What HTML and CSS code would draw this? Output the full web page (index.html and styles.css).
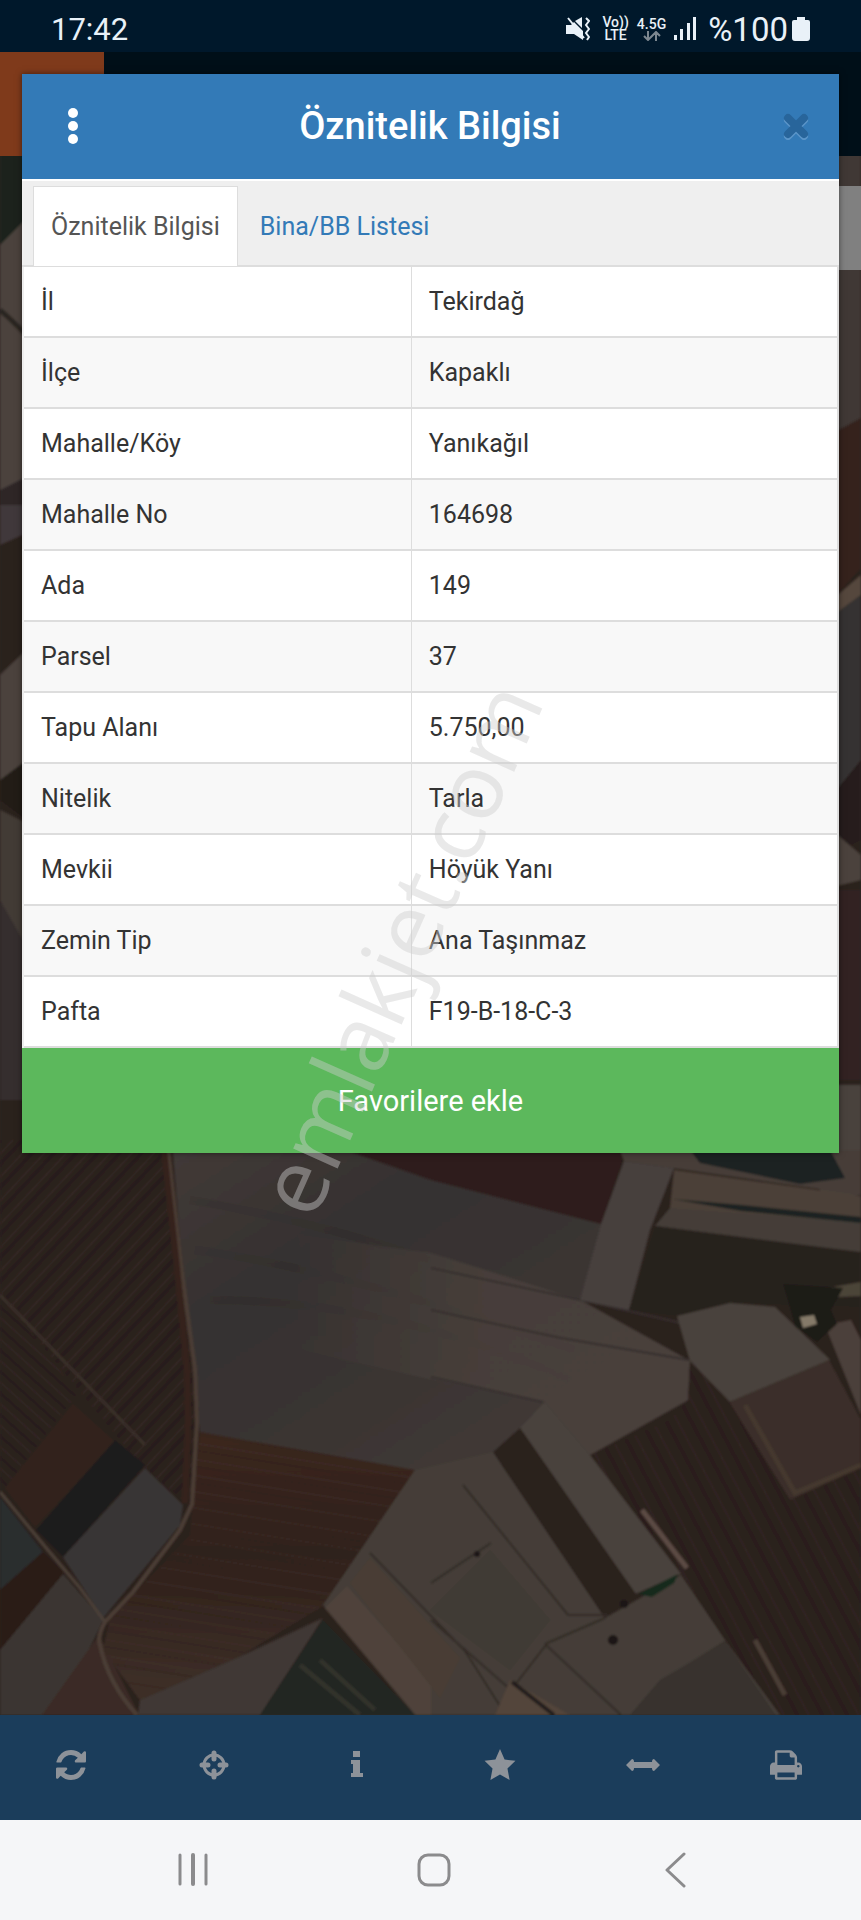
FILE: index.html
```html
<!DOCTYPE html>
<html lang="tr">
<head>
    <meta charset="UTF-8">
    <meta name="viewport" content="width=device-width, initial-scale=1.0">
    <title>Öznitelik Bilgisi</title>
    <link rel="stylesheet" href="styles.css">
</head>
<body>
    <div class="status-bar">
        <span class="clock">17:42</span>
        <div class="status-icons">
            <svg class="icon-mute" viewBox="0 0 24 24" width="24" height="24">
                <path d="M0 8h5l3-3 9 9v9l-9-6H0z M9 4l7-4v11z" fill="currentColor"/>
                <path d="M2 1l16 20M20 1l3 3-3 4 3 4-3 4 3 4-2 3" fill="none" stroke="currentColor" stroke-width="2"/>
            </svg>
            <span class="volte"><span>Vo))</span><span>LTE</span></span>
            <span class="network">
                <span>4.5G</span>
                <svg viewBox="0 0 18 10" width="18" height="10"><path d="M5 0v9M1 5l4 4 4-4M13 10V1M9 5l4-4 4 4" fill="none" stroke="#7c8790" stroke-width="2"/></svg>
            </span>
            <svg class="icon-signal" viewBox="0 0 22 24" width="22" height="24"><path d="M0 18h3v5H0zM6 12h3v11H6zM13 6h3v17h-3zM19 0h3v23h-3z" fill="currentColor"/></svg>
            <span class="battery-text">%100</span>
            <svg viewBox="0 0 18 24" width="18" height="24"><path d="M5 0h8v3h3q2 0 2 2v16q0 3-3 3H3q-3 0-3-3V5q0-2 2-2h3z" fill="currentColor"/></svg>
        </div>
    </div>

    <div class="app">
        <div class="app-header"><div class="app-logo"></div></div>

        <div class="map">
            <svg class="map-image" viewBox="0 156 861 1559" preserveAspectRatio="xMidYMax slice">
                <defs>
                    <pattern id="rows-left" width="16" height="16" patternUnits="userSpaceOnUse" patternTransform="rotate(42)">
                        <path d="M0 3h16" stroke="#3a2b25" stroke-width="2"/>
                        <path d="M0 11h16" stroke="#211917" stroke-width="3"/>
                    </pattern>
                    <pattern id="rows-up" width="16" height="16" patternUnits="userSpaceOnUse" patternTransform="rotate(-47)">
                        <path d="M0 3h16" stroke="#382a25" stroke-width="2"/>
                        <path d="M0 10h16" stroke="#231b18" stroke-width="3"/>
                    </pattern>
                    <pattern id="rows-down" width="22" height="22" patternUnits="userSpaceOnUse" patternTransform="rotate(62)">
                        <path d="M0 3h22" stroke="#382b27" stroke-width="2"/>
                        <path d="M0 13h22" stroke="#261b18" stroke-width="3"/>
                    </pattern>
                    <pattern id="rows-flat" width="16" height="16" patternUnits="userSpaceOnUse" patternTransform="rotate(9)">
                        <path d="M0 3h16" stroke="#41302a" stroke-width="2"/>
                        <path d="M0 10h16" stroke="#2e201b" stroke-width="2"/>
                    </pattern>
                    <linearGradient id="grey-field" x1="0" y1="0" x2="1" y2="1">
                        <stop offset="0" stop-color="#433b38"/>
                        <stop offset=".3" stop-color="#353130"/>
                        <stop offset=".6" stop-color="#3b3533"/>
                        <stop offset="1" stop-color="#483f3b"/>
                    </linearGradient>
                    <linearGradient id="light-field" x1="0" y1="0" x2="1" y2="0">
                        <stop offset="0" stop-color="#4a413c" stop-opacity="0"/>
                        <stop offset=".5" stop-color="#4a413c"/>
                        <stop offset="1" stop-color="#4a413c"/>
                    </linearGradient>
                    <linearGradient id="brown-field" x1="0" y1="0" x2="0" y2="1">
                        <stop offset="0" stop-color="#3b271f"/>
                        <stop offset=".45" stop-color="#2f201b"/>
                        <stop offset="1" stop-color="#3e3028"/>
                    </linearGradient>
                    <filter id="soft" x="0" y="0" width="100%" height="100%"><feGaussianBlur stdDeviation="1"/></filter>
                </defs>
                <g filter="url(#soft)">
                    <rect y="140" width="861" height="1590" fill="#2c211e"/>

                    <!-- strip left of the dialog -->
                    <path d="M0 140h40v80L0 250z" fill="#1e211e"/>
                    <path d="M0 245l40-40v290L0 505z" fill="#4b423c"/>
                    <path d="M0 310q18 15 40 40" fill="none" stroke="#2b2723" stroke-width="5"/>
                    <path d="M0 490l40-20v60H0z" fill="#2e2828"/>
                    <path d="M0 505h40v30L0 545z" fill="#41393a"/>
                    <path d="M0 545l40-18v110L0 680z" fill="#2b201d"/>
                    <path d="M0 675l40-38v130L0 790z" fill="#4c433d"/>
                    <path d="M0 780l40-30v80L0 800z" fill="#211b19"/>
                    <path d="M0 810l40 20v170L0 1050z" fill="#423a35"/>
                    <path d="M0 900l40 70v130H0z" fill="#352f2e"/>

                    <!-- strip right of the dialog -->
                    <path d="M820 140h41v280l-41 20z" fill="#3f3835"/>
                    <path d="M820 440l41-22v150l-41 45z" fill="#35231c"/>
                    <path d="M820 610l41-35v20l-41 30z" fill="#55473c"/>
                    <path d="M820 625l41-30v230h-41z" fill="#363332"/>
                    <path d="M820 810l41-50v80l-41 20z" fill="#261e1b"/>
                    <path d="M820 820l41 35v25l-41 10z" fill="#4b423c"/>
                    <path d="M820 890h41v190h-41z" fill="#302120"/>
                    <path d="M820 1085h41v110h-41z" fill="#4a423c"/>

                    <!-- fields west of the road -->
                    <path d="M0 1140h168l15 126 12 104v60l-5 76-50-42L0 1295z" fill="#2c201d"/>
                    <path d="M0 1140h168l15 126 12 104v60l-5 76-50-42L0 1295z" fill="url(#rows-up)" opacity=".6"/>
                    <path d="M0 1295l78 98-73 95-5-10z" fill="url(#rows-left)" opacity=".4"/>
                    <path d="M0 1295l145 150" stroke="#3a302b" stroke-width="3"/>
                    <path d="M5 1488l68-84 42 38-80 85z" fill="#33241d"/>
                    <path d="M115 1440l30 25-82 92-27-27z" fill="#1f1d1c"/>
                    <path d="M145 1468l38 37-3 20-77 93-40-61z" fill="#393534"/>
                    <path d="M0 1497l43 55-43 38z" fill="#2b2d2f"/>
                    <path d="M43 1552l22 22-65 78v-62z" fill="#2a1b18"/>
                    <path d="M63 1574l40 46-45 95H0v-65z" fill="#3a3632"/>
                    <path d="M99 1635l40 80H42z" fill="#3a2c26"/>

                    <!-- large grey and brown fields -->
                    <path d="M172 1140h190l240 84-22 76 110 61-2 39-98 55-45-53-52 73h-80l-213-43-5-70-13-100z" fill="url(#grey-field)"/>
                    <path d="M195 1250q150 20 380 100M210 1300q180 0 360 80M190 1200q120 20 240 60" fill="none" stroke="#2f2b2a" stroke-width="8" opacity=".25"/>
                    <path d="M300 1235l131 18 149 47 110 61-2 39-98 55-45-53-125-25-130-30z" fill="url(#light-field)" opacity=".8"/>
                    <path d="M431 1268l150 32 109 25M431 1310l130 28 128 22M431 1377l112 25" fill="none" stroke="#362f2d" stroke-width="2"/>
                    <path d="M345 1150h280l-24 74-170-44z" fill="#2e1e1a"/>
                    <path d="M200 1432l215 38-40 70-52 66-83 50-100 44-37-50 7-30 80-85z" fill="url(#brown-field)"/>
                    <path d="M200 1432l215 38-40 70-52 66-83 50-100 44-37-50 7-30 80-85z" fill="url(#rows-flat)" opacity=".35"/>
                    <path d="M140 1700l110-48 73-34-63 97H138z" fill="#413834"/>
                    <path d="M323 1620l92 95H260z" fill="#202623"/>
                    <path d="M300 1665l60 50M320 1660l55 50" stroke="#33332c" stroke-width="5"/>

                    <!-- north east -->
                    <path d="M620 1150h241v45l-189-27-48-7z" fill="#463d38"/>
                    <path d="M690 1150h140l15 28-45 6-100-21z" fill="#1c2223"/>
                    <path d="M624 1161l50 7-24 62-21 80-49-10 21-76z" fill="#463f3c"/>
                    <path d="M674 1170l187 26v27l-191-14z" fill="#4c4138"/>
                    <path d="M670 1208l191 14v30l-206-26z" fill="#443e39"/>
                    <path d="M672 1199l70 6 119 12v6l-120-12z" fill="#1f2422"/>
                    <path d="M655 1226l206 27v54l-131-4-53 13-48-6z" fill="#28211f"/>
                    <path d="M815 1290l46-8v14l-46 2z" fill="#4c4438"/>
                    <path d="M677 1316l53-13 45 4 50 48 5 5-100 42-40-41z" fill="#49423c"/>
                    <path d="M729 1402l100-42 32 60v48l-71 32z" fill="#3a2f29"/>
                    <path d="M745 1405l50 88 66-28" fill="none" stroke="#45382f" stroke-width="5"/>
                    <path d="M825 1325l26-5 10 20v75z" fill="#4c403a"/>
                    <path d="M783 1284l60 4-12 22 6 14-20 18-22-16-6-22z" fill="#1c1a17"/>
                    <path d="M800 1317l14-2 3 9-14 4z" fill="#857a69"/>

                    <!-- ploughed field and strips -->
                    <path d="M690 1361l39 41 61 98 71-32v247h-86l-50-75-44-68-91-117 80-35 18-20z" fill="#2c201d"/>
                    <path d="M690 1361l39 41 61 98 71-32v247h-86l-50-75-44-68-91-117 80-35 18-20z" fill="url(#rows-down)" opacity=".5"/>
                    <path d="M642 1510l45 58" stroke="#5c4b44" stroke-width="5"/>
                    <path d="M755 1640l30 55" stroke="#4a3d36" stroke-width="5"/>
                    <path d="M415 1470l78-18 112 166 76-43 44 65 55 75H415l-92-110z" fill="#443d37"/>
                    <path d="M545 1402l45 53 91 119-46 20-115-166z" fill="#49433d"/>
                    <path d="M520 1428l116 166-31 24-112-166z" fill="#2a201e"/>
                    <path d="M638 1594l40-20-4 9-22 14z" fill="#18291f"/>
                    <path d="M370 1553l95 98 35 55M431 1583l60-40M463 1485l105 130h40M431 1620l80 70 35-45 75 70M605 1618l-60 26M727 1641l-65 40" fill="none" stroke="#322b27" stroke-width="2"/>
                    <path d="M325 1608l22-22 84 95v34h-15z" fill="#4f433b"/>
                    <path d="M350 1583l20-25 90 100-20 40z" fill="#483e35"/>
                    <path d="M430 1610l60-60 60 70-40 50z" fill="#3c3832" opacity=".5"/>
                    <path d="M510 1680l60 35h-75z" fill="#52453a"/>
                    <path d="M660 1680l66-38 50 73H630z" fill="#38332f"/>
                    <path d="M512 1682l42 33" stroke="#241e1b" stroke-width="4"/>
                    <circle cx="613" cy="1640" r="5" fill="#1b1715"/>
                    <circle cx="624" cy="1604" r="4" fill="#1b1715"/>
                    <circle cx="477" cy="1554" r="3" fill="#1b1715"/>

                    <!-- roads -->
                    <path d="M167 1140l14 126 14 104 2 53-5 81-12 26-47 62-28 30q-8 14-5 23 8 38 37 70" fill="none" stroke="#4b3d36" stroke-width="4"/>
                    <path d="M163 1140l14 126 10 104 1 53-3 80" fill="none" stroke="#35231d" stroke-width="6"/>
                    <path d="M0 1492l47 57 33 39 25 34" fill="none" stroke="#4b3f38" stroke-width="3"/>
                </g>
            </svg>
            <div class="map-control"></div>
        </div>

        <div class="toolbar">
            <button type="button" aria-label="Yenile">
                <svg viewBox="0 0 1536 1536" width="30" height="30"><path fill="currentColor" d="M1511 928q0 5-1 7-64 268-268 434.500T764 1536q-146 0-282.500-55T238 1324l-129 129q-19 19-45 19t-45-19-19-45V960q0-26 19-45t45-19h448q26 0 45 19t19 45-19 45l-137 137q71 66 161 102t187 36q134 0 250-65t186-179q11-17 53-117 8-23 30-23h192q13 0 22.500 9.500T1511 928zM1536 128v448q0 26-19 45t-45 19h-448q-26 0-45-19t-19-45 19-45l138-138Q969 256 768 256q-134 0-250 65T332 500q-11 17-53 117-8 23-30 23H50q-13 0-22.500-9.500T18 608v-7q65-268 270-434.500T768 0q146 0 284 55.500T1297 212l130-129q19-19 45-19t45 19 19 45z"/></svg>
            </button>
            <button type="button" aria-label="Konum">
                <svg viewBox="0 0 30 30" width="30" height="30"><circle cx="15" cy="15" r="10" fill="none" stroke="currentColor" stroke-width="3"/><path d="M15 3v6M15 21v6M3 15h6M21 15h6" fill="none" stroke="currentColor" stroke-width="5" stroke-linecap="round"/></svg>
            </button>
            <button type="button" aria-label="Bilgi">
                <svg viewBox="0 0 30 30" width="30" height="30"><path fill="currentColor" d="M11 1h7v6h-7zM9 10h9v13h3v4H9v-4h2v-9H9z"/></svg>
            </button>
            <button type="button" aria-label="Favoriler">
                <svg viewBox="0 0 30 30" width="32" height="32"><path fill="currentColor" d="M15 0l4.300 9.900L29.500 11l-7.500 7.300 2 10.700-9-5.200L6 29l2-10.700L.5 11l10.200-1.100z"/></svg>
            </button>
            <button type="button" aria-label="Ölçüm">
                <svg viewBox="0 0 34 30" width="34" height="30"><path fill="currentColor" d="M0 15l6-6q2 0 2 3h18q0-3 2-3l6 6-6 6q-2 0-2-3H8q0 3-2 3z"/></svg>
            </button>
            <button type="button" aria-label="Yazdır">
                <svg viewBox="0 0 1664 1536" width="32" height="30"><path fill="currentColor" d="M384 1408h896v-256H384v256zm0-640h896V384h-160q-40 0-68-28t-28-68V128H384v640zm1152 64q0-26-19-45t-45-19-45 19-19 45 19 45 45 19 45-19 19-45zm128 0v416q0 13-9.500 22.500t-22.500 9.500h-224v160q0 40-28 68t-68 28H352q-40 0-68-28t-28-68v-160H32q-13 0-22.500-9.500T0 1248V832q0-79 56.500-135.500T192 640h64V96q0-40 28-68t68-28h672q40 0 88 20t76 48l152 152q28 28 48 76t20 88v256h64q79 0 135.500 56.500T1664 832z"/></svg>
            </button>
        </div>

        <div class="modal">
            <div class="modal-header">
                <button type="button" class="menu-btn" aria-label="Menü">
                    <svg viewBox="0 0 10 36" width="10" height="36"><circle cx="5" cy="5" r="5"/><circle cx="5" cy="18" r="5"/><circle cx="5" cy="31" r="5"/></svg>
                </button>
                <h1>Öznitelik Bilgisi</h1>
                <button type="button" class="close-btn" aria-label="Kapat">
                    <svg viewBox="0 0 28 28" width="28" height="28"><path d="M6 8l16 16M22 8L6 24" stroke="#5b95c9" stroke-width="8" stroke-linecap="round"/><path d="M6 6l16 16M22 6L6 22" stroke="#28659b" stroke-width="8" stroke-linecap="round"/></svg>
                </button>
            </div>
            <div class="tabs">
                <a href="#bilgi" class="tab active">Öznitelik Bilgisi</a>
                <a href="#liste" class="tab">Bina/BB Listesi</a>
            </div>
            <table class="info-table" id="bilgi">
                <tr><th scope="row">İl</th><td>Tekirdağ</td></tr>
                <tr><th scope="row">İlçe</th><td>Kapaklı</td></tr>
                <tr><th scope="row">Mahalle/Köy</th><td>Yanıkağıl</td></tr>
                <tr><th scope="row">Mahalle No</th><td>164698</td></tr>
                <tr><th scope="row">Ada</th><td>149</td></tr>
                <tr><th scope="row">Parsel</th><td>37</td></tr>
                <tr><th scope="row">Tapu Alanı</th><td>5.750,00</td></tr>
                <tr><th scope="row">Nitelik</th><td>Tarla</td></tr>
                <tr><th scope="row">Mevkii</th><td>Höyük Yanı</td></tr>
                <tr><th scope="row">Zemin Tip</th><td>Ana Taşınmaz</td></tr>
                <tr><th scope="row">Pafta</th><td>F19-B-18-C-3</td></tr>
            </table>
            <button type="button" class="favorite-btn">Favorilere ekle</button>
        </div>
        <div class="watermark">emlakjet.com</div>
    </div>

    <div class="nav-bar">
        <button type="button" aria-label="Son uygulamalar">
            <svg viewBox="0 0 32 36" width="32" height="36"><path d="M3 3v29M29 3v29" stroke-width="3"/><path d="M16 3v29" stroke-width="4"/></svg>
        </button>
        <button type="button" aria-label="Ana ekran">
            <svg viewBox="0 0 36 36" width="36" height="36"><rect x="3" y="3" width="30" height="30" rx="9" stroke-width="3"/></svg>
        </button>
        <button type="button" aria-label="Geri">
            <svg viewBox="0 0 24 36" width="24" height="36"><path d="M20 2L3 18l17 16" stroke-width="3"/></svg>
        </button>
    </div>
</body>
</html>
```
FILE: styles.css
```css
* {
    box-sizing: border-box;
}
body {
    margin: 0;
    min-height: 100vh;
    display: flex;
    flex-direction: column;
    font-family: Roboto, "Liberation Sans", sans-serif;
    background: #2c211e;
}
button {
    border: 0;
    padding: 0;
    background: none;
    font-family: inherit;
}
svg {
    display: block;
}

/* phone status bar */
.status-bar {
    height: 52px;
    padding: 6px 51px 0;
    display: flex;
    align-items: center;
    justify-content: space-between;
    background: #00182b;
    color: #e9f1f8;
}
.clock {
    font-size: 31px;
}
.status-icons {
    display: flex;
    align-items: center;
}
.volte,
.network {
    display: flex;
    flex-direction: column;
    align-items: center;
    margin-left: 12px;
    font-size: 14px;
    line-height: 13px;
    font-weight: 500;
}
.network {
    margin-left: 8px;
}
.icon-signal {
    margin: 0 12px 0 8px;
}
.battery-text {
    margin-right: 4px;
    font-size: 33px;
}

/* app */
.app {
    position: relative;
    flex: 1;
    display: flex;
    flex-direction: column;
}
.app-header {
    height: 104px;
    background: #000f18;
}
.app-logo {
    width: 104px;
    height: 104px;
    background: #7f3a1b;
}
.map {
    position: relative;
    flex: 1;
    min-height: 1100px;
    overflow: hidden;
}
.map-image {
    position: absolute;
    width: 100%;
    height: 100%;
}
.map-control {
    position: absolute;
    top: 30px;
    right: 0;
    width: 104px;
    height: 84px;
    background: #808080;
}
.toolbar {
    height: 105px;
    padding: 0 4px 6px 0;
    display: grid;
    grid-template-columns: repeat(6, 1fr);
    background: #1b3d5b;
}
.toolbar button {
    display: flex;
    align-items: center;
    justify-content: center;
    color: #8d9299;
}

/* dialog */
.modal {
    position: absolute;
    top: 22px;
    left: 22px;
    right: 22px;
    background: #fff;
    box-shadow: 0 0 6px rgba(0, 0, 0, 0.5);
}
.modal-header {
    height: 105px;
    padding: 0 29px 2px 46px;
    display: flex;
    align-items: center;
    justify-content: space-between;
    background: #337ab7;
    color: #fff;
}
.modal-header h1 {
    margin: 0;
    font-size: 38px;
    font-weight: 500;
}
.menu-btn {
    fill: #fff;
}
.tabs {
    height: 88px;
    padding: 5px 11px 0;
    display: flex;
    background: #efefef;
    border-top: 2px solid #fff;
    border-bottom: 2px solid #ddd;
}
.tab {
    height: 80px;
    padding: 0 17px;
    margin-right: 4px;
    line-height: 80px;
    font-size: 25px;
    color: #337ab7;
    text-decoration: none;
    border: 1px solid transparent;
}
.tab.active {
    color: #555;
    background: #fff;
    border-color: #ddd;
    border-bottom: 0;
}
.info-table {
    width: 100%;
    border-collapse: separate;
    border-spacing: 0;
    table-layout: fixed;
    border-left: 2px solid #eee;
    border-right: 2px solid #ddd;
}
.info-table tr:nth-child(even) {
    background: #f8f8f8;
}
.info-table th,
.info-table td {
    height: 71px;
    padding: 0 17px;
    font-size: 25px;
    font-weight: 400;
    text-align: left;
    color: #333;
    border-bottom: 2px solid #ddd;
}
.info-table th {
    width: 47.7%;
    border-right: 1px solid #ddd;
}
.favorite-btn {
    display: block;
    width: 100%;
    height: 105px;
    font-size: 29px;
    color: #fff;
    background: #5cb85c;
}
.watermark {
    position: absolute;
    top: 896px;
    left: 398px;
    font-family: "Open Sans", "Noto Sans", sans-serif;
    font-size: 91px;
    line-height: 1;
    color: rgba(204, 204, 204, 0.44);
    transform: translate(-50%, -50%) rotate(-66deg);
    pointer-events: none;
}

/* phone navigation bar */
.nav-bar {
    height: 100px;
    padding: 0 64px 0 72px;
    display: grid;
    grid-template-columns: repeat(3, 1fr);
    background: #f5f6f8;
}
.nav-bar button {
    display: flex;
    align-items: center;
    justify-content: center;
}
.nav-bar svg {
    fill: none;
    stroke: #8b8b8d;
    stroke-linecap: round;
    stroke-linejoin: round;
}
```
